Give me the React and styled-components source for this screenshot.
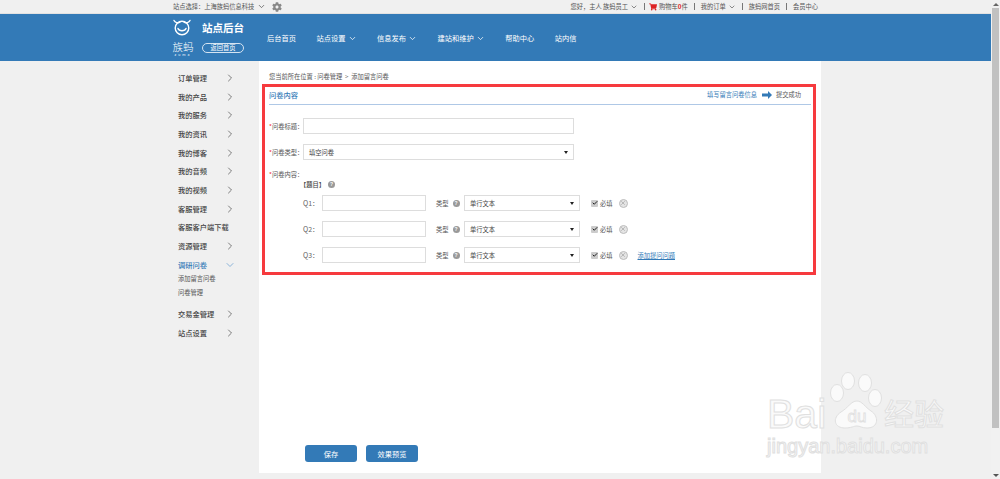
import React from "react";
import styled, { createGlobalStyle } from "styled-components";
import { ChevronDown, ChevronRight, X, Check } from "lucide-react";
import { FaCog, FaShoppingCart } from "react-icons/fa";

const FONT = `"Noto Sans CJK SC", "Liberation Sans", sans-serif`;
const BLUE = "#337ab7";

const Global = createGlobalStyle`
  html, body { margin: 0; padding: 0; height: 479px; overflow: hidden; background: #f0f0f0; }
  body { font-family: ${FONT}; font-size: 6.25px; color: #555; }
`;

const Page = styled.div`
  position: relative;
  width: 1000px;
  height: 479px;
  overflow: hidden;
  background: #f0f0f0;
`;

const Content = styled.div`
  width: 991px;
`;

const TopBar = styled.div`
  height: 13px;
  padding: 0 173px 0 173px;
  display: flex;
  align-items: center;
  justify-content: space-between;
  border-bottom: 1px solid #e2e2e2;
  line-height: 13px;
`;

const TopGroup = styled.div`
  display: flex;
  align-items: center;
`;

const TopItem = styled.span`
  display: flex;
  align-items: center;
  gap: 2px;
  padding: ${(p) => p.$pad || "0 6px"};
  border-left: ${(p) => (p.$first ? "none" : "1px solid #777")};
  height: 7px;
  color: #555;
  white-space: nowrap;
`;

const Red = styled.b`
  color: #e02020;
  font-weight: 700;
`;

const Header = styled.header`
  height: 47px;
  background: ${BLUE};
  padding-left: 171px;
  display: flex;
  align-items: flex-start;
`;

const Logo = styled.div`
  width: 24px;
  margin-top: 4px;
  color: #fff;
  text-align: center;
`;

const LogoName = styled.div`
  font-size: 10.5px;
  line-height: 11px;
  font-weight: 300;
`;

const LogoSub = styled.div`
  margin-top: 1px;
  font-size: 3.5px;
  line-height: 4px;
  letter-spacing: 2px;
`;

const Brand = styled.div`
  width: 42px;
  margin: 6px 0 0 7px;
  color: #fff;
`;

const BrandTitle = styled.div`
  font-size: 10.5px;
  line-height: 15px;
  font-weight: 700;
  white-space: nowrap;
`;

const BackBtn = styled.div`
  margin-top: 8px;
  height: 8px;
  line-height: 8px;
  border: 1px solid #d5e4f2;
  border-radius: 5px;
  font-size: 6.25px;
  text-align: center;
`;

const Nav = styled.nav`
  display: flex;
  margin: 17px 0 0 23px;
  gap: 20.5px;
  color: #fff;
  font-size: 7.25px;
  line-height: 14px;
`;

const NavItem = styled.span`
  display: flex;
  align-items: center;
  gap: 2px;
  white-space: nowrap;
`;

const Body = styled.div`
  display: flex;
  height: 412px;
  padding-left: 178px;
`;

const Side = styled.aside`
  width: 81px;
  padding-top: 7.5px;
  flex: none;
`;

const SideRow = styled.div`
  height: 18.7px;
  display: flex;
  align-items: center;
  justify-content: space-between;
  padding-right: 23px;
  color: ${(p) => (p.$active ? BLUE : "#444")};
  font-size: 7.25px;
  font-weight: 500;
  white-space: nowrap;
`;

const SubList = styled.div`
  margin: -2px 0 5px;
`;

const SideSub = styled.div`
  height: 14px;
  line-height: 14px;
  font-size: 6.25px;
  color: #555;
`;

const Main = styled.main`
  width: 562px;
  background: #fff;
  padding: 9px 8px 0 10px;
  box-sizing: border-box;
  display: flex;
  flex-direction: column;
`;

const Crumb = styled.div`
  height: 13px;
  line-height: 13px;
  font-size: 6.25px;
  color: #555;
`;

const Marked = styled.section`
  margin: 1px 0 0 -7px;
  width: 554px;
  height: 191px;
  box-sizing: border-box;
  border: 3px solid #f63a3e;
  padding: 0 2px 0 4px;
`;

const PanelHead = styled.div`
  height: 15px;
  display: flex;
  align-items: center;
  justify-content: space-between;
  border-bottom: 1px solid #afc8e6;
  padding: 0 10px 2px 0;
`;

const PanelTitle = styled.span`
  color: ${BLUE};
  font-size: 7.25px;
  font-weight: 500;
`;

const Steps = styled.div`
  display: flex;
  align-items: center;
  gap: 4.5px;
  font-size: 6.25px;
  color: #555;
  svg { color: ${BLUE}; }
`;

const StepNow = styled.span`
  color: ${BLUE};
`;

const Row = styled.div`
  display: flex;
  align-items: center;
  height: ${(p) => p.$h || 16}px;
  margin-top: ${(p) => p.$top}px;
`;

const Label = styled.label`
  width: 34px;
  flex: none;
  font-size: 6.25px;
  color: #555;
  white-space: nowrap;
  &::before { content: "*"; color: #e33; }
`;

const TextBox = styled.input`
  width: ${(p) => p.$w}px;
  height: 16px;
  box-sizing: border-box;
  border: 1px solid #ddd;
  background: #fff;
  padding: 0;
  outline: none;
`;

const Pick = styled.div`
  width: ${(p) => p.$w}px;
  height: 16px;
  box-sizing: border-box;
  border: 1px solid #ddd;
  display: flex;
  align-items: center;
  justify-content: space-between;
  padding: 0 5px 0 5px;
  font-size: 6.25px;
  color: #444;
  &::after {
    content: "";
    border: 2px solid transparent;
    border-top: 3px solid #222;
    border-bottom: 0;
  }
`;

const Heading = styled.div`
  display: flex;
  align-items: center;
  gap: 3px;
  height: 11px;
  margin-left: 31px;
  font-size: 6.25px;
  font-weight: 500;
  color: #444;
`;

const Help = styled.i`
  width: 7px;
  height: 7px;
  border-radius: 50%;
  background: #999;
  color: #fff;
  font: 700 5px/7px "Liberation Sans", sans-serif;
  text-align: center;
  flex: none;
  &::before { content: "?"; }
`;

const QRow = styled.div`
  display: flex;
  align-items: center;
  height: 16px;
  margin-top: ${(p) => p.$top}px;
  padding-left: 34px;
`;

const QLabel = styled.span`
  width: 19px;
  flex: none;
  font-size: 7px;
  color: #666;
`;

const TypeLabel = styled.span`
  display: flex;
  align-items: center;
  gap: 4px;
  width: 28px;
  margin-left: 10px;
  flex: none;
  font-size: 6.25px;
  color: #555;
`;

const Tick = styled.span`
  width: 7px;
  height: 7px;
  margin-left: 11px;
  background: #ccc;
  border-radius: 1px;
  display: flex;
  align-items: center;
  justify-content: center;
  color: #222;
  flex: none;
`;

const Must = styled.span`
  margin-left: 2px;
  font-size: 6.25px;
  color: #555;
  white-space: nowrap;
`;

const Remove = styled.span`
  width: 9px;
  height: 9px;
  box-sizing: border-box;
  margin-left: 6px;
  border: 1px solid #bdbdbd;
  border-radius: 50%;
  background: #e4e4e4;
  display: flex;
  align-items: center;
  justify-content: center;
  color: #aaa;
  flex: none;
`;

const AddLink = styled.a`
  margin-left: 10px;
  font-size: 6.25px;
  color: ${BLUE};
  text-decoration: underline;
  white-space: nowrap;
`;

const Actions = styled.div`
  margin: auto 0 11px 36px;
  display: flex;
  gap: 9px;
`;

const Btn = styled.button`
  width: 52px;
  height: 17px;
  padding: 0;
  border: 0;
  border-radius: 3px;
  background: ${BLUE};
  color: #fff;
  font-family: ${FONT};
  font-size: 7.25px;
`;

const Scrollbar = styled.div`
  position: absolute;
  right: 0;
  top: 0;
  bottom: 0;
  width: 7px;
  padding: 0 1px;
  background: #f1f1f1;
  display: flex;
  flex-direction: column;
  align-items: center;
`;

const ArrowUp = styled.span`
  margin: 3px 0 2px;
  border: 3px solid transparent;
  border-top: 0;
  border-bottom: 3px solid #666;
`;

const ArrowDown = styled.span`
  margin: auto 0 2px;
  border: 3px solid transparent;
  border-bottom: 0;
  border-top: 3px solid #555;
`;

const Thumb = styled.div`
  width: 7px;
  height: 420px;
  background: #c1c1c1;
`;

const Mark = styled.div`
  position: absolute;
  left: 767px;
  top: 372px;
  color: #fafafa;
  -webkit-text-stroke: 1px #e0e0e0;
  font-family: "Liberation Sans", ${FONT};
  white-space: nowrap;
  pointer-events: none;
`;

const MarkTop = styled.div`
  display: flex;
  align-items: flex-end;
  height: 58px;
`;

const MarkBai = styled.span`
  width: 62px;
  font-size: 41px;
  line-height: 41px;
  margin-bottom: -5px;
`;

const MarkCn = styled.span`
  font-size: 30px;
  line-height: 30px;
  margin-left: 1px;
`;

const MarkBottom = styled.div`
  font-size: 20px;
  line-height: 22px;
  margin-top: 5px;
`;

const SIDE = ["订单管理", "我的产品", "我的服务", "我的资讯", "我的博客", "我的音频", "我的视频", "客服管理"];

const Question = ({ name, top, link }) => (
  <QRow $top={top}>
    <QLabel>{name}：</QLabel>
    <TextBox $w={104} />
    <TypeLabel>类型<Help /></TypeLabel>
    <Pick $w={116}>单行文本</Pick>
    <Tick><Check size={6} strokeWidth={4} /></Tick>
    <Must>必填</Must>
    <Remove><X size={6} strokeWidth={3} /></Remove>
    {link && <AddLink>添加提问问题</AddLink>}
  </QRow>
);

const SideItem = ({ name }) => (
  <SideRow>{name}<ChevronRight size={12} strokeWidth={1.5} color="#555" /></SideRow>
);

const App = () => (
  <Page>
    <Global />
    <Content>
      <TopBar>
        <TopGroup>
          <span>站点选择：上海族蚂信息科技</span>
          <ChevronDown size={9} style={{ marginLeft: 3 }} />
          <FaCog size={10} color="#888" style={{ marginLeft: 6 }} />
        </TopGroup>
        <TopGroup>
          <TopItem $first>您好，主人 族蚂员工<ChevronDown size={8} /></TopItem>
          <TopItem $pad="0 6px 0 4px"><FaShoppingCart size={8} color="#d22" /><span>购物车<Red>0</Red>件</span></TopItem>
          <TopItem>我的订单<ChevronDown size={8} /></TopItem>
          <TopItem>族蚂网首页</TopItem>
          <TopItem $pad="0 0 0 6px">会员中心</TopItem>
        </TopGroup>
      </TopBar>

      <Header>
        <Logo>
          <svg width="24" height="21" viewBox="0 0 24 21" fill="none" stroke="#fff" strokeWidth="1.4" strokeLinecap="round">
            <circle cx="11" cy="10" r="6.800" />
            <path d="M3 2.500c1 2 4 3 6 1.500M19 2.500c-1 2-4 3-6 1.500" />
            <path d="M7 10.500c1.200 3 6.800 3 8 0" />
          </svg>
          <LogoName>族蚂</LogoName>
          <LogoSub>zuma</LogoSub>
        </Logo>
        <Brand>
          <BrandTitle>站点后台</BrandTitle>
          <BackBtn>返回首页</BackBtn>
        </Brand>
        <Nav>
          <NavItem>后台首页</NavItem>
          <NavItem>站点设置<ChevronDown size={9} /></NavItem>
          <NavItem>信息发布<ChevronDown size={9} /></NavItem>
          <NavItem>建站和维护<ChevronDown size={9} /></NavItem>
          <NavItem>帮助中心</NavItem>
          <NavItem>站内信</NavItem>
        </Nav>
      </Header>

      <Body>
        <Side>
          {SIDE.map((s) => <SideItem key={s} name={s} />)}
          <SideRow>客服客户端下载</SideRow>
          <SideItem name="资源管理" />
          <SideRow $active>调研问卷<ChevronDown size={12} strokeWidth={1.5} color="#6a9fd0" /></SideRow>
          <SubList>
            <SideSub>添加留言问卷</SideSub>
            <SideSub>问卷管理</SideSub>
          </SubList>
          <SideItem name="交易金管理" />
          <SideItem name="站点设置" />
        </Side>
        <Main>
          <Crumb>您当前所在位置 : 问卷管理&nbsp; &gt; &nbsp;添加留言问卷</Crumb>
          <Marked>
            <PanelHead>
              <PanelTitle>问卷内容</PanelTitle>
              <Steps>
                <StepNow>填写留言问卷信息</StepNow>
                <svg width="10" height="8" viewBox="0 0 10 8" fill="currentColor">
                  <path d="M0 2.500h6V0l4 4-4 4V5.500H0z" />
                </svg>
                <span>提交成功</span>
              </Steps>
            </PanelHead>
            <Row $top={13}><Label>问卷标题：</Label><TextBox $w={271} /></Row>
            <Row $top={10}><Label>问卷类型：</Label><Pick $w={271}>填空问卷</Pick></Row>
            <Row $top={9} $h={10}><Label>问卷内容：</Label></Row>
            <Heading>【题目】<Help /></Heading>
            <Question name="Q1" top={5} />
            <Question name="Q2" top={10} />
            <Question name="Q3" top={10} link />
          </Marked>
          <Actions>
            <Btn>保存</Btn>
            <Btn>效果预览</Btn>
          </Actions>
        </Main>
      </Body>
    </Content>

    <Mark>
      <MarkTop>
        <MarkBai>Bai</MarkBai>
        <svg width="54" height="58" viewBox="0 0 54 58" fill="#fafafa" stroke="#e0e0e0" strokeWidth="1">
          <ellipse cx="19" cy="9" rx="6.500" ry="8.500" />
          <ellipse cx="36" cy="11" rx="6.500" ry="8.500" />
          <ellipse cx="8" cy="21" rx="6.500" ry="8.500" />
          <ellipse cx="46" cy="26" rx="6.500" ry="8.500" />
          <path d="M28 29c5 0 8 6 14 10 8 5 8 17-4 17-5 0-7-2-10-2s-6 2-12 2C5 56 3 46 12 40c7-4 10-11 16-11z" />
          <text x="28" y="50" textAnchor="middle" fontSize="17" strokeWidth="0.8" fontFamily="Liberation Sans, sans-serif">du</text>
        </svg>
        <MarkCn>经验</MarkCn>
      </MarkTop>
      <MarkBottom>jingyan.baidu.com</MarkBottom>
    </Mark>

    <Scrollbar>
      <ArrowUp />
      <Thumb />
      <ArrowDown />
    </Scrollbar>
  </Page>
);

export default App;
